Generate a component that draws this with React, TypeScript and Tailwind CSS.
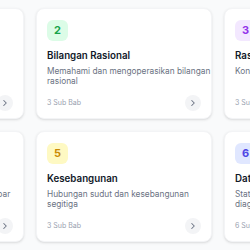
import React from 'react';
import { ChevronRight } from 'lucide-react';

type Chapter = {
  no: number;
  title: string;
  desc: string;
  subs: number;
  badge: string;
};

const CHAPTERS: Chapter[] = [
  { no: 1, title: 'Bilangan Bulat', desc: 'Operasi hitung bilangan bulat', subs: 4, badge: 'bg-[#dbeafe] text-[#2563eb]' },
  { no: 2, title: 'Bilangan Rasional', desc: 'Memahami dan mengoperasikan bilangan rasional', subs: 3, badge: 'bg-[#dcfce7] text-[#16a34a]' },
  { no: 3, title: 'Rasio dan Proporsi', desc: 'Konsep rasio dan perbandingan', subs: 3, badge: 'bg-[#f3e8ff] text-[#9333ea]' },
  { no: 4, title: 'Bangun Datar', desc: 'Luas dan keliling pada bangun gambar datar', subs: 4, badge: 'bg-[#fee2e2] text-[#dc2626]' },
  { no: 5, title: 'Kesebangunan', desc: 'Hubungan sudut dan kesebangunan segitiga', subs: 3, badge: 'bg-[#fef9c3] text-[#ca8a04]' },
  { no: 6, title: 'Data dan Statistika', desc: 'Statistika dan penyajian data dengan diagram', subs: 6, badge: 'bg-[#e0e7ff] text-[#4f46e5]' },
];

function ChapterCard({ chapter }: { chapter: Chapter }) {
  return (
    <div className="flex h-[111px] flex-col rounded-lg border border-gray-100 bg-white px-[10px] pt-[11px] pb-[7px] shadow-sm">
      <div
        className={`flex h-[21px] w-[21px] items-center justify-center rounded-md text-[11px] font-bold ${chapter.badge}`}
      >
        {chapter.no}
      </div>
      <h3 className="mt-[8px] text-[9.75px] leading-[14px] font-semibold text-gray-900">
        {chapter.title}
      </h3>
      <p className="mt-[3px] mr-[-16px] text-[8.3px] leading-[10px] text-gray-500">{chapter.desc}</p>
      <div className="mt-auto flex items-center justify-between">
        <span className="text-[7px] text-gray-400">{chapter.subs} Sub Bab</span>
        <span className="flex h-4 w-4 items-center justify-center rounded-full bg-gray-100">
          <ChevronRight className="h-2.5 w-2.5 text-gray-500" strokeWidth={2.5} />
        </span>
      </div>
    </div>
  );
}

export default function App() {
  return (
    <div
      className="h-[250px] w-[250px] overflow-hidden bg-gray-50 pt-[8px]"
      style={{ fontFamily: 'Inter, "Noto Sans", sans-serif' }}
    >
      <div className="ml-[-152px] grid w-max grid-cols-[176px_176px_176px] gap-x-3 gap-y-3">
        {CHAPTERS.map((c) => (
          <ChapterCard key={c.no} chapter={c} />
        ))}
      </div>
    </div>
  );
}
